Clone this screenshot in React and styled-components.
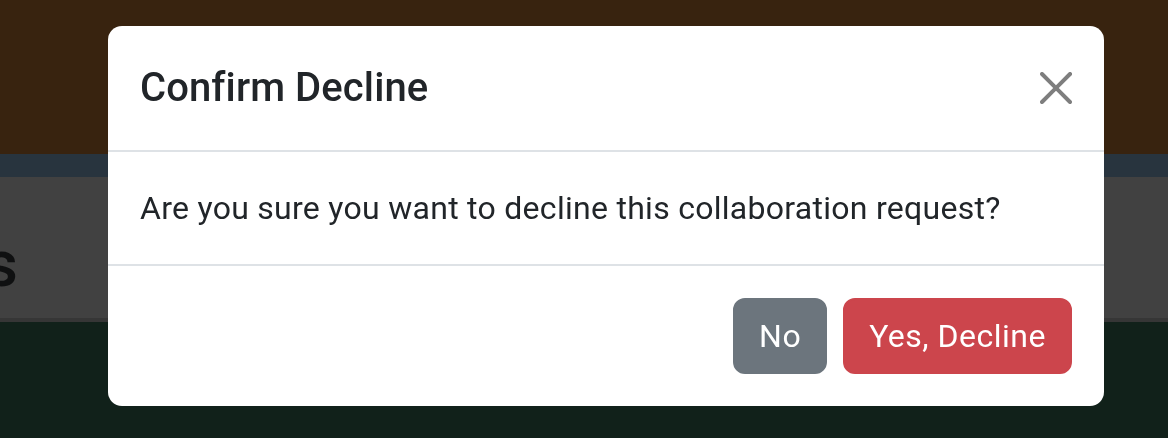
import React from "react";
import styled, { createGlobalStyle } from "styled-components";

const GlobalStyle = createGlobalStyle`
  html, body { margin: 0; padding: 0; }
  body {
    font-family: Roboto, "Liberation Sans", sans-serif;
    background: #11211a;
    overflow: hidden;
  }
`;

const Page = styled.div`
  width: 1168px;
  height: 438px;
  display: flex;
  flex-direction: column;
  background: #11211a;
`;

const Band = styled.div`
  height: ${(p) => p.h}px;
  background: ${(p) => p.bg};
  flex-shrink: 0;
`;

const TitleBand = styled.div`
  height: 145px;
  background: #414141;
  border-bottom: 4px solid #363636;
  padding-top: 50px;
  box-sizing: border-box;
  flex-shrink: 0;
`;

const HeadingSlot = styled.div`
  width: 18px;
  display: flex;
  justify-content: flex-end;
  white-space: nowrap;
`;

const PageHeading = styled.h2`
  margin: 0;
  font-size: 64px;
  line-height: 1.2;
  font-weight: 500;
  color: #0f1011;
`;

const Overlay = styled.div`
  position: fixed;
  inset: 0;
  padding: 26px 0 0 108px;
`;

const Dialog = styled.div`
  width: 996px;
  background: #fff;
  border-radius: 14px;
  box-sizing: border-box;
  display: flex;
  flex-direction: column;
  overflow: hidden;
`;

const Header = styled.div`
  display: flex;
  align-items: center;
  padding: 32px;
  border-bottom: 2px solid #dee2e6;
`;

const Title = styled.h5`
  margin: 0;
  flex: 1;
  font-size: 40px;
  line-height: 60px;
  font-weight: 500;
  letter-spacing: 0.1px;
  color: #212529;
`;

const CloseButton = styled.button`
  width: 48px;
  height: 48px;
  padding: 8px;
  margin: -16px -8px -16px auto;
  border: 0;
  background: transparent;
  opacity: 0.5;
  display: flex;
  align-items: center;
  justify-content: center;
  cursor: pointer;
`;

const Body = styled.div`
  padding: 32px;
  font-size: 32px;
  line-height: 48px;
  letter-spacing: 0.28px;
  color: #212529;
`;

const Footer = styled.div`
  display: flex;
  justify-content: flex-end;
  align-items: center;
  padding: 24px;
  border-top: 2px solid #dee2e6;
`;

const Button = styled.button`
  margin: 8px;
  padding: 12px 24px;
  border: 2px solid ${(p) => p.color};
  background: ${(p) => p.color};
  color: #fff;
  border-radius: 12px;
  font-family: inherit;
  font-size: 32px;
  line-height: 48px;
  font-weight: 400;
  letter-spacing: 0.5px;
  cursor: pointer;
`;

const CloseIcon = () => (
  <svg width="32" height="32" viewBox="0 0 16 16" fill="#000">
    <path d="M.293.293a1 1 0 0 1 1.414 0L8 6.586 14.293.293a1 1 0 1 1 1.414 1.414L9.414 8l6.293 6.293a1 1 0 0 1-1.414 1.414L8 9.414l-6.293 6.293a1 1 0 0 1-1.414-1.414L6.586 8 .293 1.707a1 1 0 0 1 0-1.414z" />
  </svg>
);

export default function App() {
  return (
    <>
      <GlobalStyle />
      <Page>
        <Band h={154} bg="#38230f" />
        <Band h={23} bg="#28343e" />
        <TitleBand>
          <HeadingSlot>
            <PageHeading>Collaboration Requests</PageHeading>
          </HeadingSlot>
        </TitleBand>
      </Page>
      <Overlay>
        <Dialog>
          <Header>
            <Title>Confirm Decline</Title>
            <CloseButton aria-label="Close">
              <CloseIcon />
            </CloseButton>
          </Header>
          <Body>Are you sure you want to decline this collaboration request?</Body>
          <Footer>
            <Button color="#6c757d">No</Button>
            <Button color="#cc454c">Yes, Decline</Button>
          </Footer>
        </Dialog>
      </Overlay>
    </>
  );
}
